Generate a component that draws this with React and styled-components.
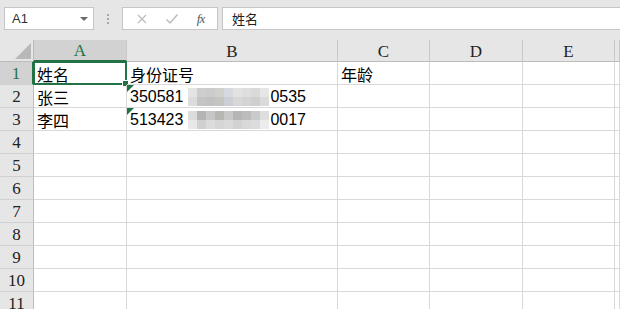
import { styled, createGlobalStyle } from "styled-components";

const Global = createGlobalStyle`
  html, body {
    margin: 0;
    padding: 0;
    background: #fff;
    overflow: hidden;
  }
`;

const Page = styled.div`
  width: 620px;
  height: 309px;
  overflow: hidden;
  background: #e6e6e6;
  font-family: "Liberation Sans", "Noto Sans CJK SC", sans-serif;
`;

// 상단 수식 입력줄
const Toolbar = styled.div`
  height: 40px;
  box-sizing: border-box;
  padding: 7px 0 0 4px;
  display: flex;
  align-items: flex-start;
`;

const NameBox = styled.div`
  width: 90px;
  height: 23px;
  box-sizing: border-box;
  background: #fff;
  border: 1px solid #c6c6c6;
  display: flex;
  align-items: center;
  justify-content: space-between;
  padding: 0 5px 0 7px;
  font-size: 13px;
  color: #333;
`;

const Caret = styled.span`
  width: 0;
  height: 0;
  border-left: 4px solid transparent;
  border-right: 4px solid transparent;
  border-top: 4px solid #6a6a6a;
`;

const Dots = styled.div`
  width: 28px;
  height: 23px;
  display: flex;
  flex-direction: column;
  align-items: center;
  justify-content: center;
  gap: 2px;

  span {
    width: 2px;
    height: 2px;
    background: #a8a8a8;
  }
`;

const FxBox = styled.div`
  width: 96px;
  height: 23px;
  box-sizing: border-box;
  background: #fff;
  border: 1px solid #c6c6c6;
  display: flex;
  align-items: center;
  justify-content: space-around;
  padding: 0 4px;
`;

const Fx = styled.span`
  font-family: "Liberation Serif", serif;
  font-style: italic;
  font-size: 13px;
  color: #555;
  letter-spacing: -1px;
`;

const Input = styled.div`
  flex: 1;
  margin-left: 4px;
  height: 23px;
  box-sizing: border-box;
  background: #fff;
  border: 1px solid #c6c6c6;
  border-right: none;
  display: flex;
  align-items: center;
  padding-left: 9px;
  font-size: 13px;
  color: #222;
`;

// 시트 영역
const Sheet = styled.div`
  display: grid;
  grid-template-columns: 34px 93px 211px 92px 93px 92px 1fr;
  grid-auto-rows: 23px;
  grid-template-rows: 22px;
  background: #fff;
`;

const Corner = styled.div`
  position: relative;
  background: #e6e6e6;
  border-right: 1px solid #bcbcbc;
  border-bottom: 1px solid #bcbcbc;
  box-sizing: border-box;

  &::after {
    content: "";
    position: absolute;
    right: 2px;
    bottom: 2px;
    width: 0;
    height: 0;
    border-left: 16px solid transparent;
    border-bottom: 16px solid #b8b8b8;
  }
`;

const ColHead = styled.div`
  background: ${(p) => (p.$active ? "#d2d2d2" : "#e6e6e6")};
  color: ${(p) => (p.$active ? "#217346" : "#222")};
  border-right: 1px solid #c8c8c8;
  border-bottom: ${(p) => (p.$active ? "2px solid #217346" : "1px solid #bcbcbc")};
  box-sizing: border-box;
  display: flex;
  align-items: center;
  justify-content: center;
  font-family: "Liberation Serif", serif;
  font-size: 17px;
  padding-top: 2px;
`;

const RowHead = styled.div`
  background: ${(p) => (p.$active ? "#d2d2d2" : "#e6e6e6")};
  color: ${(p) => (p.$active ? "#217346" : "#222")};
  border-right: ${(p) => (p.$active ? "2px solid #217346" : "1px solid #bcbcbc")};
  border-bottom: 1px solid #d0d0d0;
  box-sizing: border-box;
  display: flex;
  align-items: center;
  justify-content: center;
  font-family: "Liberation Serif", serif;
  font-size: 17px;
  padding-top: 2px;
`;

const Cell = styled.div`
  position: relative;
  border-right: 1px solid #d9d9d9;
  border-bottom: 1px solid #d9d9d9;
  box-sizing: border-box;
  display: flex;
  align-items: center;
  padding: 2px 0 0 3px;
  font-family: "Liberation Sans", "Noto Sans CJK SC", sans-serif;
  font-size: 16px;
  color: #000;
  white-space: nowrap;
`;

const Selection = styled.div`
  position: absolute;
  left: -1px;
  top: -1px;
  right: -1px;
  bottom: -1px;
  border: 2px solid #217346;
  pointer-events: none;

  &::after {
    content: "";
    position: absolute;
    right: -4px;
    bottom: -4px;
    width: 5px;
    height: 5px;
    background: #217346;
    border: 1px solid #fff;
  }
`;

const ErrorMark = styled.span`
  position: absolute;
  left: 0;
  top: 0;
  width: 0;
  height: 0;
  border-top: 7px solid #217346;
  border-right: 7px solid transparent;
`;

const Mosaic = styled.span`
  display: inline-grid;
  grid-template-columns: repeat(9, 9px);
  grid-template-rows: 9px 9px;
  margin: 0 1px 0 5px;
`;

const Tile = styled.span`
  background: ${(p) => p.$c};
`;

const mosaicA = [
  "#e4e4e4", "#cdcdcd", "#cbcbcb", "#d2d0cc", "#d6dae0", "#e2e2e2", "#dedede", "#d9d9d9", "#e6e6e6",
  "#dcdcdc", "#c4c4c4", "#c2c2c2", "#c6c4c0", "#ccd0d6", "#d8d8d8", "#d4d4d4", "#cfcfcf", "#dadada",
];
const mosaicB = [
  "#dcdcdc", "#b4b4b4", "#c6c6c6", "#b8b6b2", "#c8c8c8", "#b6b6b6", "#bcbcbc", "#cacaca", "#dedede",
  "#e8e8e8", "#d0d0d0", "#dcdcdc", "#d6d6d6", "#dadada", "#d2d2d2", "#d8d8d8", "#dcdcdc", "#ececec",
];

const Blur = ({ colors }) => (
  <Mosaic>
    {colors.map((c, i) => (
      <Tile key={i} $c={c} />
    ))}
  </Mosaic>
);

const cols = ["A", "B", "C", "D", "E", ""];

const rows = [
  ["姓名", "身份证号", "年龄"],
  ["张三", <>350581<Blur colors={mosaicA} />0535</>, ""],
  ["李四", <>513423<Blur colors={mosaicB} />0017</>, ""],
];

const App = () => {
  const total = 11;

  return (
    <Page>
      <Global />
      <Toolbar>
        <NameBox>
          A1
          <Caret />
        </NameBox>
        <Dots>
          <span />
          <span />
          <span />
        </Dots>
        <FxBox>
          <svg width="12" height="12" viewBox="0 0 12 12">
            <path d="M2 2 L10 10 M10 2 L2 10" stroke="#bdbdbd" strokeWidth="1.3" />
          </svg>
          <svg width="14" height="12" viewBox="0 0 14 12">
            <path d="M1.5 6.5 L5 10 L12.5 1.5" stroke="#bdbdbd" strokeWidth="1.5" fill="none" />
          </svg>
          <Fx>fx</Fx>
        </FxBox>
        <Input>姓名</Input>
      </Toolbar>

      <Sheet>
        <Corner />
        {cols.map((c, i) => (
          <ColHead key={i} $active={c === "A"}>{c}</ColHead>
        ))}

        {Array.from({ length: total }).map((_, r) => {
          const data = rows[r] || [];
          return [
            <RowHead key={`h${r}`} $active={r === 0}>{r + 1}</RowHead>,
            ...cols.map((_, ci) => (
              <Cell key={`${r}-${ci}`}>
                {r === 0 && ci === 0 && <Selection />}
                {(r === 1 || r === 2) && ci === 1 && <ErrorMark />}
                {data[ci]}
              </Cell>
            )),
          ];
        })}
      </Sheet>
    </Page>
  );
};

export default App;
